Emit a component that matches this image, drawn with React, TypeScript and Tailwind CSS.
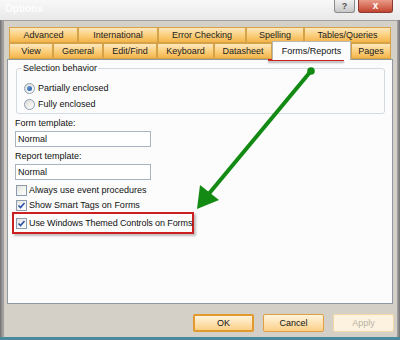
import React from "react";

const row1 = [
  { t: "Advanced", w: 69 },
  { t: "International", w: 80 },
  { t: "Error Checking", w: 88 },
  { t: "Spelling", w: 58 },
  { t: "Tables/Queries", w: 87 },
];
const row2 = [
  { t: "View", w: 44 },
  { t: "General", w: 50 },
  { t: "Edit/Find", w: 54 },
  { t: "Keyboard", w: 57 },
  { t: "Datasheet", w: 58 },
  { t: "Forms/Reports", w: 79, sel: true },
  { t: "Pages", w: 40 },
];

function Tab({ t, w, sel }: { t: string; w: number; sel?: boolean }) {
  if (sel) {
    return (
      <div
        className="relative z-10 -mt-[2px] h-[19px] flex items-center justify-center bg-[#fcfcfc] border border-b-0 border-[#b8b8b0] text-[#111] whitespace-nowrap"
        style={{ width: w }}
      >
        {t}
      </div>
    );
  }
  return (
    <div
      className="h-[16px] flex items-center justify-center bg-gradient-to-b from-[#fde8bc] via-[#fbd07e] to-[#f3b448] border border-[#d6a247] text-[#222] whitespace-nowrap"
      style={{ width: w }}
    >
      {t}
    </div>
  );
}

function Check({ on }: { on?: boolean }) {
  return (
    <div className="shrink-0 w-[11px] h-[11px] border border-[#8c9cb0] bg-gradient-to-br from-[#e4e4de] to-white flex items-center justify-center">
      {on && (
        <svg width="9" height="9" viewBox="0 0 9 9">
          <path d="M1.5 4.5 L3.5 6.5 L7.5 2" stroke="#2a4fa8" strokeWidth="1.6" fill="none" />
        </svg>
      )}
    </div>
  );
}

function Radio({ on }: { on?: boolean }) {
  return (
    <div className="shrink-0 w-[11px] h-[11px] rounded-full border border-[#8c9cb0] bg-gradient-to-br from-[#dcdcd6] to-white flex items-center justify-center">
      {on && <div className="w-[5px] h-[5px] rounded-full bg-gradient-to-br from-[#6fa0d8] to-[#1f5aa0]" />}
    </div>
  );
}

export default function App() {
  return (
    <div
      className="relative w-[400px] h-[340px] overflow-hidden bg-[#d4d0c8] text-[9px] leading-none text-[#111] whitespace-nowrap"
      style={{ fontFamily: '"Liberation Sans", Arial, sans-serif' }}
    >
      {/* title bar */}
      <div className="h-[20px] bg-gradient-to-b from-[#f8f8f8] to-[#e9e9e9] flex items-start justify-between">
        <div className="pl-[5px] pt-[4px] text-[10px] font-bold text-white [text-shadow:0_0_1px_#ececec]">Options</div>
        <div className="flex gap-[3px] pr-[7px]">
          <div className="w-[21px] h-[13px] rounded-b-[3px] border border-t-0 border-[#8a8a8a] bg-gradient-to-b from-[#f0f0f0] to-[#c8c8c8] flex items-center justify-center text-[9px] font-bold text-[#555]">?</div>
          <div className="w-[35px] h-[13px] rounded-b-[3px] border border-t-0 border-[#8a3a30] bg-gradient-to-b from-[#e89a88] to-[#c2432f] flex items-center justify-center text-[10px] font-bold text-white">x</div>
        </div>
      </div>

      {/* window body */}
      <div className="h-[317px] flex">
        <div className="w-[3px] bg-gradient-to-r from-[#707070] to-[#a8a8a8]" />
        <div className="flex-1 flex flex-col border-t border-l border-[#a0a0a0] pl-[3px] pr-[3px]">
          <div className="pt-[6px] pl-[2px] flex flex-col">
            <div className="flex h-[16px]">
              {row1.map((r) => (
                <Tab key={r.t} t={r.t} w={r.w} />
              ))}
            </div>
            <div className="flex h-[16px] items-start">
              {row2.map((r) => (
                <Tab key={r.t} t={r.t} w={r.w} sel={r.sel} />
              ))}
            </div>
          </div>
          {/* panel */}
          <div className="h-[245px] w-[386px] bg-[#fcfcfc] border border-[#9199a0] pl-[8px] pr-[7px] pt-[8px] flex flex-col">
            <div className="relative w-[369px] h-[46px] border border-[#d3dae0] rounded-[3px] pl-[7px] pt-[14px] flex flex-col gap-[5px]">
              <div className="absolute left-[5px] -top-[5px] px-[1px] bg-[#fcfcfc]">Selection behavior</div>
              <div className="flex items-center gap-[3px]">
                <Radio on />
                <span>Partially enclosed</span>
              </div>
              <div className="flex items-center gap-[3px]">
                <Radio />
                <span>Fully enclosed</span>
              </div>
            </div>
            <div className="-ml-[1px] mt-[5px]">Form template:</div>
            <div className="-ml-[1px] mt-[3px] w-[136px] h-[16px] border border-[#a8b4c0] bg-white flex items-center pl-[2px]">Normal</div>
            <div className="-ml-[1px] mt-[5px]">Report template:</div>
            <div className="-ml-[1px] mt-[3px] w-[136px] h-[16px] border border-[#a8b4c0] bg-white flex items-center pl-[2px]">Normal</div>
            <div className="mt-[5px] flex items-center gap-[2px]">
              <Check />
              <span>Always use event procedures</span>
            </div>
            <div className="mt-[4px] flex items-center gap-[2px]">
              <Check on />
              <span>Show Smart Tags on Forms</span>
            </div>
            <div className="mt-[1px] -ml-[4px] w-[182px] h-[22px] border-2 border-[#cc1f1f] pl-[2px] flex items-center gap-[2px] shadow-[2px_2px_2px_rgba(0,0,0,0.25)]">
              <Check on />
              <span className="tracking-[-0.1px]">Use Windows Themed Controls on Forms</span>
            </div>
          </div>
          {/* buttons */}
          <div className="mt-[10px] flex justify-end gap-[9px]">
            <div className="w-[61px] h-[18px] rounded-[2px] border-2 border-[#e29a2e] bg-gradient-to-b from-[#fff4dc] to-[#fbcf86] flex items-center justify-center">OK</div>
            <div className="w-[61px] h-[18px] rounded-[2px] border border-[#e0a040] bg-gradient-to-b from-[#fff4dc] to-[#fbcf86] flex items-center justify-center">Cancel</div>
            <div className="w-[61px] h-[18px] rounded-[2px] border border-[#f3d7a4] bg-[#fdf2df] text-[#b8b2a6] flex items-center justify-center">Apply</div>
          </div>
        </div>
        <div className="w-[3px] bg-gradient-to-r from-[#a8a8a8] to-[#707070]" />
      </div>
      <div className="h-[3px] bg-[#4a8a9c]" />

      {/* annotations */}
      <div className="absolute left-[268px] top-[59px] w-[76px] h-[2px] bg-[#cc1f1f] shadow-[0_2px_2px_rgba(0,0,0,0.3)]" />
      <svg className="absolute left-0 top-0" width="400" height="340" viewBox="0 0 400 340">
        <line x1="311" y1="71" x2="207" y2="196" stroke="#138a13" strokeWidth="4" />
        <circle cx="311" cy="71" r="3.8" fill="#138a13" />
        <polygon points="197,209 200,185 219,200" fill="#138a13" />
      </svg>
    </div>
  );
}
